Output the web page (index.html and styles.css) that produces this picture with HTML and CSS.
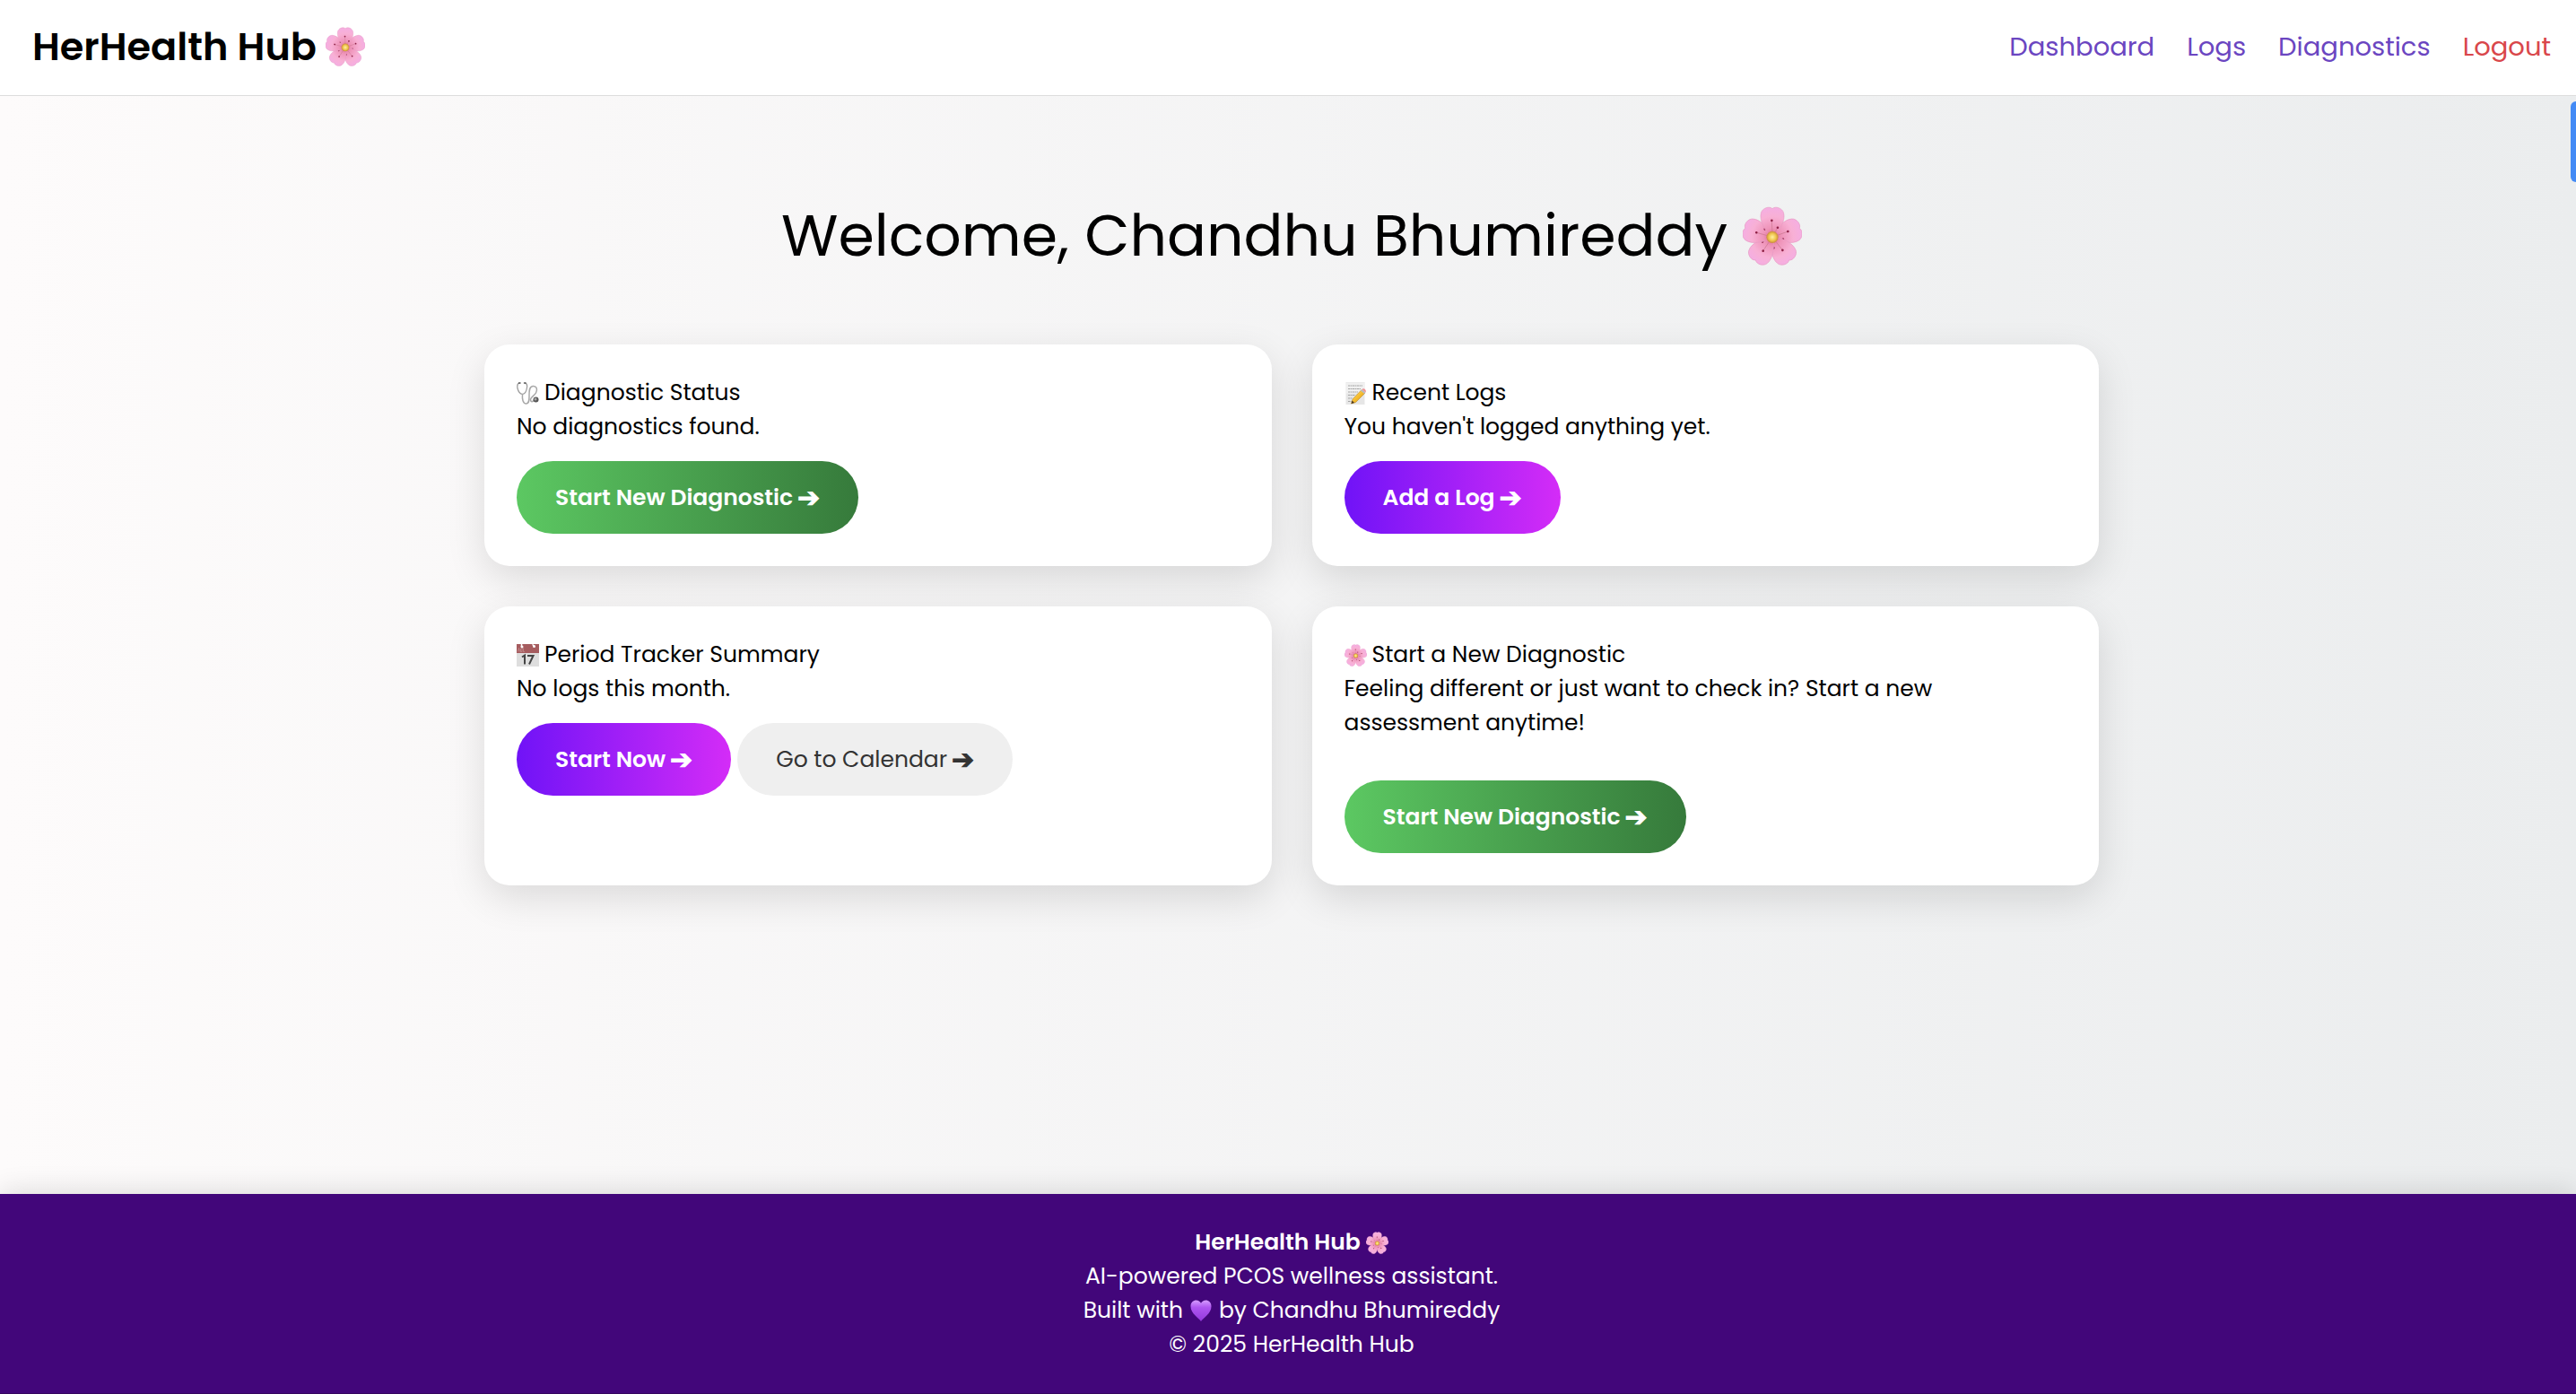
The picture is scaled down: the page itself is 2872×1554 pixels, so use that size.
FILE: index.html
```html
<!DOCTYPE html>
<html lang="en">
<head>
  <meta charset="utf-8">
  <meta name="viewport" content="width=device-width, initial-scale=1">
  <title>HerHealth Hub</title>
  <link rel="stylesheet" href="styles.css">
</head>
<body>
  <svg class="sprite" aria-hidden="true">
    <defs>
      <radialGradient id="petal-fill" gradientUnits="userSpaceOnUse" cx="50" cy="52" r="50">
        <stop offset="0" stop-color="#d9648e"/>
        <stop offset="0.3" stop-color="#ee93b8"/>
        <stop offset="0.7" stop-color="#f8b0d5"/>
        <stop offset="1" stop-color="#f5aee2"/>
      </radialGradient>
      <radialGradient id="pollen-fill">
        <stop offset="0" stop-color="#fff0a0"/>
        <stop offset="0.6" stop-color="#f0c64e"/>
        <stop offset="1" stop-color="#c98a3c"/>
      </radialGradient>
      <linearGradient id="heart-fill" x1="0" y1="0" x2="0" y2="1">
        <stop offset="0" stop-color="#d59bff"/>
        <stop offset="0.35" stop-color="#ae55f0"/>
        <stop offset="1" stop-color="#9238dc"/>
      </linearGradient>
      <linearGradient id="pencil-fill" x1="0" y1="0" x2="1" y2="1">
        <stop offset="0" stop-color="#ffe07a"/>
        <stop offset="0.5" stop-color="#f6bd2e"/>
        <stop offset="1" stop-color="#c98c1c"/>
      </linearGradient>
      <g id="petal">
        <path d="M50 53C39 44 27 24 31 11C33 3 45-1 50 4C55-1 67 3 69 11C73 24 61 44 50 53Z" fill="url(#petal-fill)" stroke="#e79cc4" stroke-width="1"/>
        <path d="M50 50L49 24M52 48L59 36" stroke="#c9788f" stroke-width="1" fill="none"/>
        <circle cx="49" cy="24" r="2" fill="#8e2146"/>
        <circle cx="59" cy="36" r="2" fill="#8e2146"/>
      </g>
    </defs>
    <symbol id="blossom" viewBox="0 0 100 100">
      <use href="#petal" transform="rotate(72 50 52)"/>
      <use href="#petal" transform="rotate(144 50 52)"/>
      <use href="#petal" transform="rotate(216 50 52)"/>
      <use href="#petal" transform="rotate(288 50 52)"/>
      <use href="#petal"/>
      <circle cx="50" cy="52" r="10" fill="url(#pollen-fill)"/>
    </symbol>
    <symbol id="stethoscope" viewBox="0 0 50 50">
      <g fill="none" stroke-linecap="round">
        <path d="M6 2C1 3 1 8 2 14C4 22 8 26 13 27C18 26 22 20 23 12C24 6 23 3 19 2" stroke="#9a9a9a" stroke-width="2.5"/>
        <path d="M13 27C12 38 14 48 21 48C28 48 28 40 28 32C28 22 27 10 36 9C45 8 47 16 43 24C40 30 30 34 31 40C32 45 36 44 39 40" stroke="#a8a8a8" stroke-width="3"/>
        <path d="M5 2L8 2M17 2L20 2" stroke="#555" stroke-width="3"/>
      </g>
      <circle cx="43" cy="39" r="6" fill="#555"/>
      <circle cx="42" cy="38" r="3" fill="#a5a5a5"/>
    </symbol>
    <symbol id="memo" viewBox="0 0 50 50">
      <path d="M3 0H45V50H3Z" fill="#e6e6e6"/>
      <path d="M4 1H44V25H4Z" fill="#f0f0f0"/>
      <path d="M8 8H40M8 15H36M8 22H30M8 29H24M8 36H18M8 43H15" stroke="#a5a5a5" stroke-width="2" stroke-dasharray="5 1 3 1"/>
      <path d="M15 48L18 38L38 17L46 24L25 45Z" fill="url(#pencil-fill)" stroke="#b07d1c" stroke-width="1"/>
      <path d="M15 48L17 41L22 46Z" fill="#4b3a26"/>
      <path d="M36 19L39 16L47 23L44 26Z" fill="#b9bcc0"/>
      <path d="M39 16C42 12 50 17 47 23Z" fill="#ef8f95"/>
    </symbol>
    <symbol id="calendar" viewBox="0 0 50 50">
      <path d="M0 18H50V50H0Z" fill="#dedede"/>
      <path d="M0 0H50V20H0Z" fill="#a65c5f"/>
      <path d="M3 17L5 9L7 17M9 10V17H12V10M15 9V17H18" fill="none" stroke="#d1a5a6" stroke-width="1"/>
      <path d="M11 0V6M35 1L40 5" stroke="#fff" stroke-width="3"/>
      <circle cx="12" cy="6" r="3" fill="#fff"/>
      <circle cx="39" cy="5" r="3" fill="#fff"/>
      <path d="M12 29L18 25V45M24 26H37L28 45" fill="none" stroke="#444" stroke-width="4"/>
    </symbol>
    <symbol id="heart" viewBox="0 0 50 50">
      <path d="M25 50C20 42 1 32 1 15C1 6 7 1 14 1C19 1 23 4 25 8C27 4 31 1 36 1C43 1 49 6 49 15C49 32 30 42 25 50Z" fill="url(#heart-fill)"/>
    </symbol>
  </svg>

  <header class="site-header">
    <div class="brand">HerHealth Hub <svg class="emoji" role="img" aria-label="Cherry blossom"><use href="#blossom"/></svg></div>
    <nav class="site-nav">
      <a class="nav-link" href="#dashboard">Dashboard</a>
      <a class="nav-link" href="#logs">Logs</a>
      <a class="nav-link" href="#diagnostics">Diagnostics</a>
      <a class="nav-link nav-link-danger" href="#logout">Logout</a>
    </nav>
  </header>

  <div class="side-tab"></div>

  <main class="dashboard">
    <h1 class="welcome">Welcome, Chandhu Bhumireddy <svg class="emoji" role="img" aria-label="Cherry blossom"><use href="#blossom"/></svg></h1>

    <div class="card-grid">
      <section class="card">
        <h2 class="card-title"><svg class="emoji" aria-hidden="true"><use href="#stethoscope"/></svg> Diagnostic Status</h2>
        <p class="card-text">No diagnostics found.</p>
        <div class="actions">
          <button type="button" class="btn btn-green">Start New Diagnostic <span class="arrow">➔</span></button>
        </div>
      </section>

      <section class="card">
        <h2 class="card-title"><svg class="emoji" aria-hidden="true"><use href="#memo"/></svg> Recent Logs</h2>
        <p class="card-text">You haven't logged anything yet.</p>
        <div class="actions">
          <button type="button" class="btn btn-purple">Add a Log <span class="arrow">➔</span></button>
        </div>
      </section>

      <section class="card">
        <h2 class="card-title"><svg class="emoji" aria-hidden="true"><use href="#calendar"/></svg> Period Tracker Summary</h2>
        <p class="card-text">No logs this month.</p>
        <div class="actions">
          <button type="button" class="btn btn-purple">Start Now <span class="arrow">➔</span></button>
          <button type="button" class="btn btn-plain">Go to Calendar <span class="arrow">➔</span></button>
        </div>
      </section>

      <section class="card">
        <h2 class="card-title"><svg class="emoji" aria-hidden="true"><use href="#blossom"/></svg> Start a New Diagnostic</h2>
        <p class="card-text card-text-narrow">Feeling different or just want to check in? Start a new assessment anytime!</p>
        <div class="actions actions-spaced">
          <button type="button" class="btn btn-green">Start New Diagnostic <span class="arrow">➔</span></button>
        </div>
      </section>
    </div>
  </main>

  <footer class="site-footer">
    <p class="footer-line footer-brand">HerHealth Hub <svg class="emoji" aria-hidden="true"><use href="#blossom"/></svg></p>
    <p class="footer-line">AI-powered PCOS wellness assistant.</p>
    <p class="footer-line"><span>Built with</span> <svg class="emoji emoji-heart" role="img" aria-label="love"><use href="#heart"/></svg> <span>by Chandhu Bhumireddy</span></p>
    <p class="footer-line">© 2025 HerHealth Hub</p>
  </footer>
</body>
</html>
```
FILE: styles.css
```css
*,
*::before,
*::after {
  box-sizing: border-box;
}

body {
  margin: 0;
  min-height: 100vh;
  display: flex;
  flex-direction: column;
  overflow-x: hidden;
  background: linear-gradient(to right, #fdfbfb, #ebedee);
  color: #000;
  font-family: Poppins, Inter, sans-serif;
  font-size: 25px;
  line-height: 38px;
}

h1,
h2,
p {
  margin: 0;
  font-size: inherit;
  font-weight: 400;
}

.sprite {
  position: absolute;
  width: 0;
  height: 0;
}

.emoji {
  width: 25px;
  height: 25px;
  flex: none;
}

/* Header */
.site-header {
  display: flex;
  align-items: center;
  justify-content: space-between;
  height: 107px;
  padding: 0 28px 3px 36px;
  background: #fff;
  border-bottom: 1px solid #ddd;
}

.brand {
  display: flex;
  align-items: center;
  gap: 10px;
  font-size: 43px;
  font-weight: 600;
  line-height: 66px;
}

.brand .emoji {
  width: 44px;
  height: 44px;
}

.site-nav {
  display: flex;
  gap: 36px;
  font-size: 29px;
}

.nav-link {
  color: #6b46c1;
  text-decoration: none;
}

.nav-link-danger {
  color: #d9474b;
}

/* Handle that peeks in at the window's right edge */
.side-tab {
  position: fixed;
  top: 113px;
  right: 0;
  width: 6px;
  height: 90px;
  border-radius: 8px 0 0 8px;
  background: #438af5;
}

/* Dashboard */
.dashboard {
  flex: 1;
  padding: 104px 0 104px 8px;
}

.welcome {
  display: flex;
  align-items: center;
  justify-content: center;
  gap: 17px;
  margin-bottom: 69px;
  font-size: 65px;
  line-height: 104px;
}

.welcome .emoji {
  width: 66px;
  height: 66px;
}

.card-grid {
  display: grid;
  grid-template-columns: 1fr 1fr;
  gap: 45px;
  max-width: 1800px;
  margin: 0 auto;
}

.card {
  padding: 35px 36px 36px;
  border-radius: 28px;
  background: #fff;
  box-shadow: 0 14px 44px rgba(0, 0, 0, 0.12);
}

.card-title {
  display: flex;
  align-items: center;
  gap: 6px;
}

.card-text-narrow {
  max-width: 700px;
}

.actions {
  display: flex;
  gap: 7px;
  margin-top: 19px;
}

.actions-spaced {
  margin-top: 45px;
}

.btn {
  display: flex;
  align-items: center;
  gap: 5px;
  height: 81px;
  padding: 0 43px;
  border: 0;
  border-radius: 45px;
  color: #fff;
  font: inherit;
  font-weight: 600;
  cursor: pointer;
}

.btn-green {
  background: linear-gradient(to right, #5cc862, #367a3b);
}

.btn-purple {
  background: linear-gradient(to right, #7013f7, #d42cf7);
}

.btn-plain {
  background: #efefef;
  color: #333;
  font-weight: 400;
}

.arrow {
  font-family: "DejaVu Sans", sans-serif;
  font-size: 30px;
  font-weight: 700;
  -webkit-text-stroke: 1px currentColor;
}

/* Footer */
.site-footer {
  padding: 35px 0 35px 8px;
  border-bottom: 1px solid #35055f;
  background: #42067a;
  box-shadow: 0 -4px 28px rgba(0, 0, 0, 0.12);
  color: #fff;
}

.footer-line {
  display: flex;
  align-items: center;
  justify-content: center;
  gap: 8px;
}

.footer-brand {
  gap: 6px;
  font-weight: 600;
}

.emoji-heart {
  width: 24px;
  height: 24px;
}
```
